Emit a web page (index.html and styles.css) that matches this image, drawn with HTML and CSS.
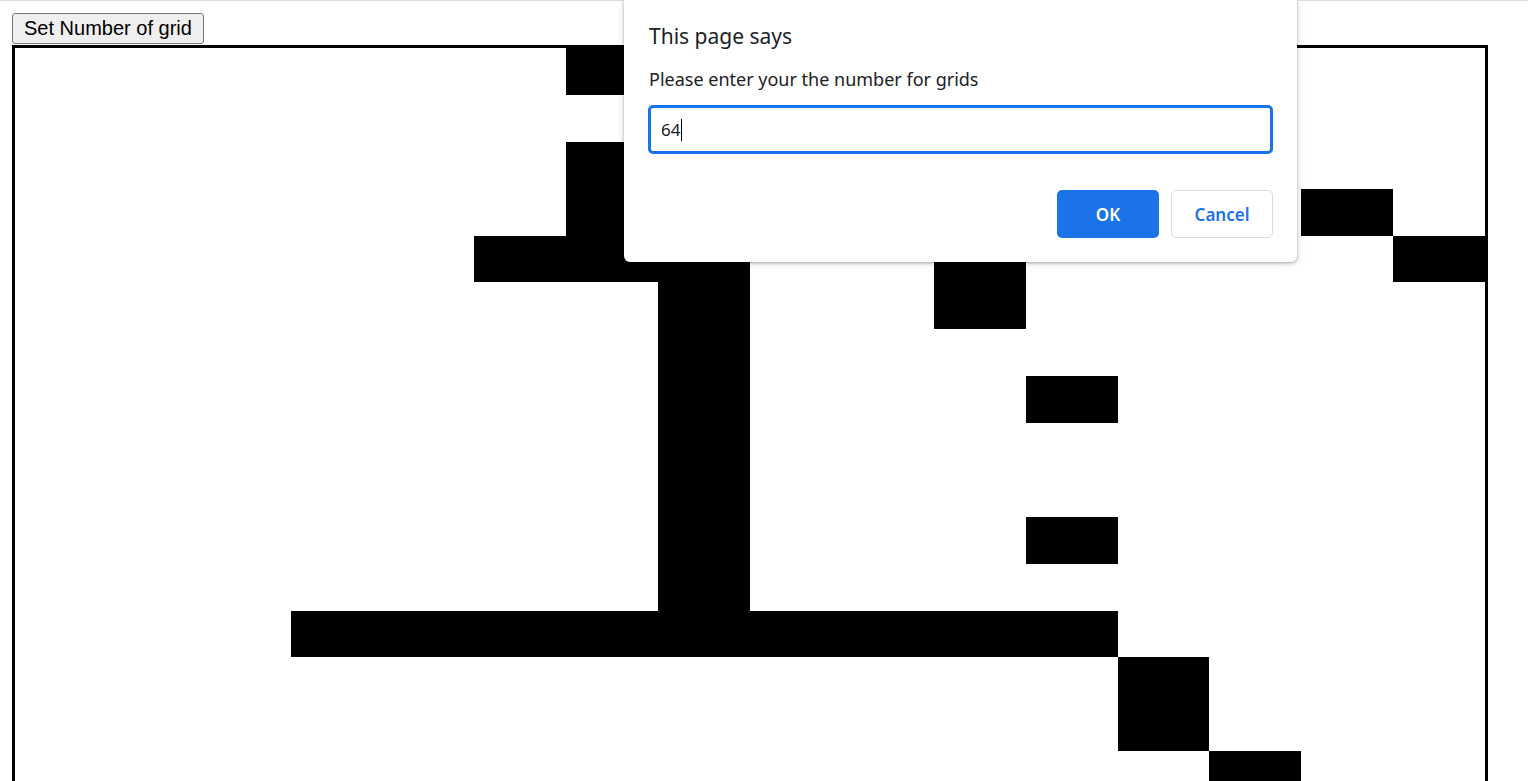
FILE: index.html
```html
<!DOCTYPE html>
<html>
<head>
<meta charset="utf-8">
<title>Etch a Sketch</title>
<link rel="stylesheet" href="styles.css">
</head>
<body>
<div class="chrome-edge"></div>
<main class="page">
  <button class="set-btn" type="button">Set Number of grid</button>
  <div class="board">
    <div class="c"></div><div class="c"></div><div class="c"></div><div class="c"></div><div class="c"></div><div class="c"></div><div class="c b"></div><div class="c"></div><div class="c"></div><div class="c"></div><div class="c"></div><div class="c"></div><div class="c"></div><div class="c"></div><div class="c"></div><div class="c"></div>
    <div class="c"></div><div class="c"></div><div class="c"></div><div class="c"></div><div class="c"></div><div class="c"></div><div class="c"></div><div class="c"></div><div class="c"></div><div class="c"></div><div class="c"></div><div class="c"></div><div class="c"></div><div class="c"></div><div class="c"></div><div class="c"></div>
    <div class="c"></div><div class="c"></div><div class="c"></div><div class="c"></div><div class="c"></div><div class="c"></div><div class="c b"></div><div class="c"></div><div class="c"></div><div class="c"></div><div class="c"></div><div class="c"></div><div class="c"></div><div class="c"></div><div class="c"></div><div class="c"></div>
    <div class="c"></div><div class="c"></div><div class="c"></div><div class="c"></div><div class="c"></div><div class="c"></div><div class="c b"></div><div class="c"></div><div class="c"></div><div class="c"></div><div class="c"></div><div class="c"></div><div class="c"></div><div class="c"></div><div class="c b"></div><div class="c"></div>
    <div class="c"></div><div class="c"></div><div class="c"></div><div class="c"></div><div class="c"></div><div class="c b"></div><div class="c b"></div><div class="c b"></div><div class="c"></div><div class="c"></div><div class="c b"></div><div class="c"></div><div class="c"></div><div class="c"></div><div class="c"></div><div class="c b"></div>
    <div class="c"></div><div class="c"></div><div class="c"></div><div class="c"></div><div class="c"></div><div class="c"></div><div class="c"></div><div class="c b"></div><div class="c"></div><div class="c"></div><div class="c b"></div><div class="c"></div><div class="c"></div><div class="c"></div><div class="c"></div><div class="c"></div>
    <div class="c"></div><div class="c"></div><div class="c"></div><div class="c"></div><div class="c"></div><div class="c"></div><div class="c"></div><div class="c b"></div><div class="c"></div><div class="c"></div><div class="c"></div><div class="c"></div><div class="c"></div><div class="c"></div><div class="c"></div><div class="c"></div>
    <div class="c"></div><div class="c"></div><div class="c"></div><div class="c"></div><div class="c"></div><div class="c"></div><div class="c"></div><div class="c b"></div><div class="c"></div><div class="c"></div><div class="c"></div><div class="c b"></div><div class="c"></div><div class="c"></div><div class="c"></div><div class="c"></div>
    <div class="c"></div><div class="c"></div><div class="c"></div><div class="c"></div><div class="c"></div><div class="c"></div><div class="c"></div><div class="c b"></div><div class="c"></div><div class="c"></div><div class="c"></div><div class="c"></div><div class="c"></div><div class="c"></div><div class="c"></div><div class="c"></div>
    <div class="c"></div><div class="c"></div><div class="c"></div><div class="c"></div><div class="c"></div><div class="c"></div><div class="c"></div><div class="c b"></div><div class="c"></div><div class="c"></div><div class="c"></div><div class="c"></div><div class="c"></div><div class="c"></div><div class="c"></div><div class="c"></div>
    <div class="c"></div><div class="c"></div><div class="c"></div><div class="c"></div><div class="c"></div><div class="c"></div><div class="c"></div><div class="c b"></div><div class="c"></div><div class="c"></div><div class="c"></div><div class="c b"></div><div class="c"></div><div class="c"></div><div class="c"></div><div class="c"></div>
    <div class="c"></div><div class="c"></div><div class="c"></div><div class="c"></div><div class="c"></div><div class="c"></div><div class="c"></div><div class="c b"></div><div class="c"></div><div class="c"></div><div class="c"></div><div class="c"></div><div class="c"></div><div class="c"></div><div class="c"></div><div class="c"></div>
    <div class="c"></div><div class="c"></div><div class="c"></div><div class="c b"></div><div class="c b"></div><div class="c b"></div><div class="c b"></div><div class="c b"></div><div class="c b"></div><div class="c b"></div><div class="c b"></div><div class="c b"></div><div class="c"></div><div class="c"></div><div class="c"></div><div class="c"></div>
    <div class="c"></div><div class="c"></div><div class="c"></div><div class="c"></div><div class="c"></div><div class="c"></div><div class="c"></div><div class="c"></div><div class="c"></div><div class="c"></div><div class="c"></div><div class="c"></div><div class="c b"></div><div class="c"></div><div class="c"></div><div class="c"></div>
    <div class="c"></div><div class="c"></div><div class="c"></div><div class="c"></div><div class="c"></div><div class="c"></div><div class="c"></div><div class="c"></div><div class="c"></div><div class="c"></div><div class="c"></div><div class="c"></div><div class="c b"></div><div class="c"></div><div class="c"></div><div class="c"></div>
    <div class="c"></div><div class="c"></div><div class="c"></div><div class="c"></div><div class="c"></div><div class="c"></div><div class="c"></div><div class="c"></div><div class="c"></div><div class="c"></div><div class="c"></div><div class="c"></div><div class="c"></div><div class="c b"></div><div class="c"></div><div class="c"></div>
  </div>
</main>

<div class="dialog" role="dialog">
  <div class="dialog-title">This page says</div>
  <div class="dialog-msg">Please enter your the number for grids</div>
  <div class="dialog-input"><span class="val">64</span><span class="caret"></span></div>
  <div class="dialog-actions">
    <button class="btn btn-ok" type="button">OK</button>
    <button class="btn btn-cancel" type="button">Cancel</button>
  </div>
</div>
</body>
</html>
```

FILE: styles.css
```css
html, body {
  margin: 0;
  padding: 0;
  overflow: hidden;
  background: #fff;
}

body {
  position: relative;
  width: 1528px;
  height: 781px;
}

.chrome-edge {
  height: 1px;
  background: #dcdcdc;
}

.page {
  padding: 12px 12px 0 12px;
  display: flex;
  flex-direction: column;
  align-items: flex-start;
  gap: 1px;
}

.set-btn {
  font-family: "Liberation Sans", Arial, sans-serif;
  font-size: 20px;
  color: #000;
  height: 31px;
  padding: 0 11px;
  background: #efefef;
  border: 1px solid #767676;
  border-radius: 3px;
  line-height: 29px;
}

.board {
  width: 1470px;
  height: 750px;
  border: 3px solid #000;
  display: grid;
  grid-template-columns: repeat(16, 1fr);
  grid-template-rows: repeat(16, 1fr);
  flex-shrink: 0;
}

.c {
  background: #fff;
}

.c.b {
  background: #000;
}

.dialog {
  position: absolute;
  left: 624px;
  top: 0;
  width: 673px;
  height: 262px;
  box-sizing: border-box;
  padding: 22px 24px 24px 25px;
  background: #fff;
  border-radius: 0 0 6px 6px;
  box-shadow: 0 1px 3px rgba(0, 0, 0, 0.3), 0 2px 8px rgba(0, 0, 0, 0.12);
  font-family: "Noto Sans", "Open Sans", sans-serif;
  color: #202124;
  display: flex;
  flex-direction: column;
}

.dialog-title {
  font-size: 21px;
  line-height: 29px;
  height: 29px;
}

.dialog-msg {
  margin-top: 15px;
  font-size: 18px;
  line-height: 26px;
}

.dialog-input {
  margin-top: 13px;
  margin-left: -1px;
  height: 49px;
  box-sizing: border-box;
  border: 3px solid #1a73e8;
  border-radius: 5px;
  padding: 0 10px;
  display: flex;
  align-items: center;
  font-size: 17px;
  color: #202124;
}

.caret {
  width: 1px;
  height: 22px;
  background: #000;
  margin-left: 1px;
}

.dialog-actions {
  margin-top: auto;
  display: flex;
  justify-content: flex-end;
  gap: 12px;
}

.btn {
  width: 102px;
  height: 48px;
  box-sizing: border-box;
  border-radius: 5px;
  font-family: "Noto Sans", "Open Sans", sans-serif;
  font-size: 17px;
  font-weight: 600;
  cursor: pointer;
}

.btn-ok {
  background: #1a73e8;
  color: #fff;
  border: none;
}

.btn-cancel {
  background: #fff;
  color: #1a73e8;
  border: 1px solid #dadce0;
}
```
